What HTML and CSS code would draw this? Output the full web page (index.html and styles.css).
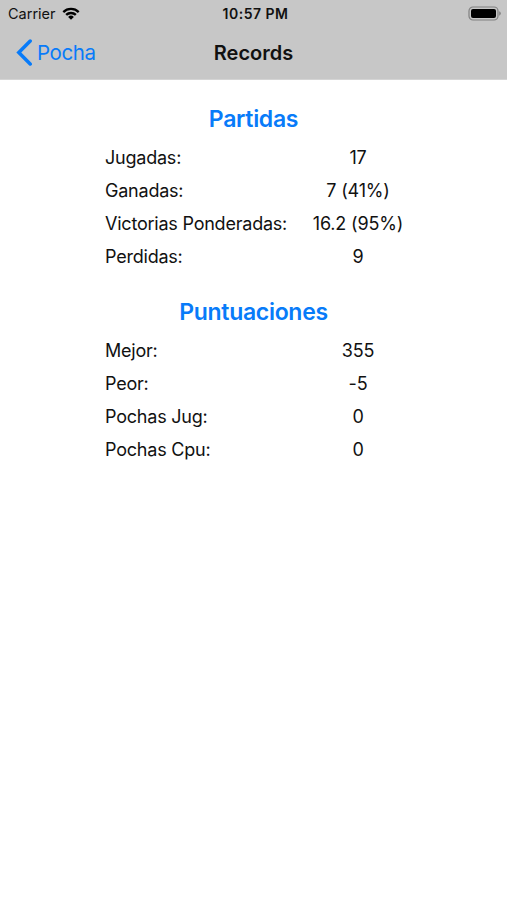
FILE: index.html
```html
<!DOCTYPE html>
<html lang="es">
<head>
<meta charset="utf-8">
<title>Records</title>
<link rel="stylesheet" href="styles.css">
</head>
<body>
<header class="top">
  <div class="status">
    <div class="carrier"><span class="carrier-name">Carrier</span>
      <svg class="wifi" width="18" height="13" viewBox="0 0 18 13"><path d="M0.5 4.2a12.2 12.2 0 0 1 17 0l-1.6 1.7a9.9 9.9 0 0 0-13.8 0zM3.3 7.1a8.2 8.2 0 0 1 11.4 0l-1.7 1.7a5.8 5.8 0 0 0-8 0zM6.1 9.9a4.2 4.2 0 0 1 5.8 0L9 12.8z"/></svg>
    </div>
    <div class="time">10:57 PM</div>
    <svg class="battery" width="33" height="15" viewBox="0 0 33 15"><rect x="1" y="1" width="29" height="13" rx="4" fill="none" stroke="#808080" stroke-width="1.2"/><rect x="3" y="3" width="25" height="9" rx="2"/><path d="M31.2 5.3q1.6.6 1.6 2.2t-1.6 2.2z" fill="#808080"/></svg>
  </div>
  <nav class="nav">
    <a class="back"><svg width="16" height="27" viewBox="0 0 16 27"><path d="M14.2 2L2.8 13.5L14.2 25" fill="none" stroke="#087bf9" stroke-width="3.5" stroke-linecap="round"/></svg><span class="back-label">Pocha</span></a>
    <h1 class="title">Records</h1>
    <span></span>
  </nav>
</header>
<main>
  <section class="group">
    <h2>Partidas</h2>
    <dl>
      <dt>Jugadas:</dt><dd>17</dd>
      <dt>Ganadas:</dt><dd>7 (41%)</dd>
      <dt>Victorias Ponderadas:</dt><dd>16.2 (95%)</dd>
      <dt>Perdidas:</dt><dd>9</dd>
    </dl>
  </section>
  <section class="group">
    <h2>Puntuaciones</h2>
    <dl>
      <dt>Mejor:</dt><dd>355</dd>
      <dt>Peor:</dt><dd>-5</dd>
      <dt>Pochas Jug:</dt><dd>0</dd>
      <dt>Pochas Cpu:</dt><dd>0</dd>
    </dl>
  </section>
</main>
</body>
</html>
```
FILE: styles.css
```css
* { box-sizing: border-box; }
body { margin: 0; background: #fff; color: #111; font-family: Inter, "Liberation Sans", sans-serif; }
.top { height: 80px; background: #c7c7c7; border-bottom: 1px solid #d4d4d4; }
.status { height: 27px; padding: 0 6px 0 8px; display: grid; grid-template-columns: 1fr auto 1fr; align-items: center; font-size: 14.5px; }
.carrier { display: flex; align-items: center; gap: 6px; }
.wifi { margin-top: -1px; }
.time { margin-left: 2px; font-weight: 600; font-size: 14px; letter-spacing: .5px; }
.battery { justify-self: end; margin-top: -1px; }
.nav { height: 51px; padding: 0 16px; display: grid; grid-template-columns: 1fr auto 1fr; align-items: center; }
.back { display: flex; align-items: center; gap: 5px; color: #087bf9; font-size: 20.5px; letter-spacing: -.4px; }
.title { margin: 0; font-size: 20px; font-weight: 600; }
main { padding-top: 18px; }
.group { height: 193px; }
h2 { margin: 0; height: 43px; line-height: 43px; text-align: center; color: #087bf9; font-size: 23px; font-weight: 600; letter-spacing: -.3px; }
dl { margin: 0 0 0 105px; display: grid; grid-template-columns: 204px 98px; grid-auto-rows: 33px; line-height: 33px; font-size: 18px; letter-spacing: -.22px; }
dd { margin: 0; text-align: center; letter-spacing: -.15px; }
```
